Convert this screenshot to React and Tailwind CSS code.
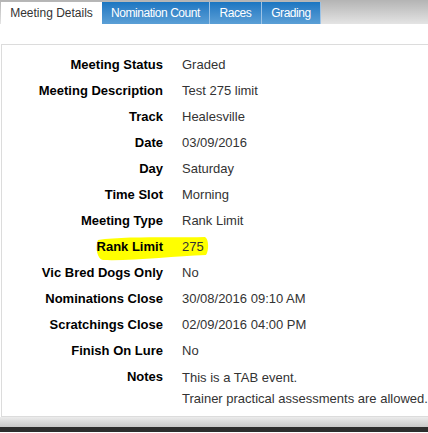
const rows = [
  ['Meeting Status', 'Graded'],
  ['Meeting Description', 'Test 275 limit'],
  ['Track', 'Healesville'],
  ['Date', '03/09/2016'],
  ['Day', 'Saturday'],
  ['Time Slot', 'Morning'],
  ['Meeting Type', 'Rank Limit'],
  ['Rank Limit', '275'],
  ['Vic Bred Dogs Only', 'No'],
  ['Nominations Close', '30/08/2016 09:10 AM'],
  ['Scratchings Close', '02/09/2016 04:00 PM'],
  ['Finish On Lure', 'No'],
];

const blueTab =
  'h-[22px] flex items-center justify-center text-[12px] tracking-[-0.45px] text-white border-l border-[#9cc3e6] bg-gradient-to-b from-[#1a76c1] to-[#5a9fd6]';

export default function App() {
  return (
    <div className="w-[428px] h-[433px] bg-white overflow-hidden font-['Liberation_Sans',Arial,sans-serif]">
      {/* Tab strip */}
      <div className="h-[24px] pt-[2px] pl-px flex bg-gradient-to-b from-[#b4b4b4] to-[#e4e4e4]">
        <div className="w-[101px] h-[22px] flex items-center justify-center bg-white text-[12px] text-[#333]">
          Meeting Details
        </div>
        <div className="w-[107px] h-[22px] flex items-center justify-center text-[12px] tracking-[-0.45px] text-white bg-gradient-to-b from-[#1a76c1] to-[#5a9fd6]">
          Nomination Count
        </div>
        <div className={`w-[52px] ${blueTab}`}>Races</div>
        <div className={`w-[60px] border-r ${blueTab}`}>Grading</div>
      </div>

      <div className="h-[20px]" />

      {/* Details panel */}
      <div className="relative ml-px h-[373px] border-t border-l border-b border-[#dcdcdc] pt-[10px]">
        <svg
          className="absolute left-[92px] top-[189px]"
          width="116"
          height="28"
          viewBox="0 0 116 28"
        >
          <path
            d="M4,6 C30,2 80,4 111,3 C115,5 115,17 112,21 C80,22 40,27 9,26 C3,25 1,13 4,6 Z"
            fill="#ffff00"
          />
        </svg>
        <div className="relative flex flex-col gap-[6px]">
          {rows.map(([label, value]) => (
            <div key={label} className="flex leading-[20px] text-[13px]">
              <div className="w-[161px] text-right font-bold text-black">{label}</div>
              <div className="ml-[19px] text-[#333]">{value}</div>
            </div>
          ))}
          <div className="flex text-[13px]">
            <div className="w-[161px] text-right font-bold text-black leading-[20px]">Notes</div>
            <div className="ml-[19px] text-[#333] leading-[21px]">
              <div>This is a TAB event.</div>
              <div>Trainer practical assessments are allowed.</div>
            </div>
          </div>
        </div>
      </div>

      <div className="h-[10px] bg-gradient-to-b from-[#ececec] to-[#c9c9c9]" />
      <div className="h-[5px] bg-[#2e2e2e]" />
    </div>
  );
}
